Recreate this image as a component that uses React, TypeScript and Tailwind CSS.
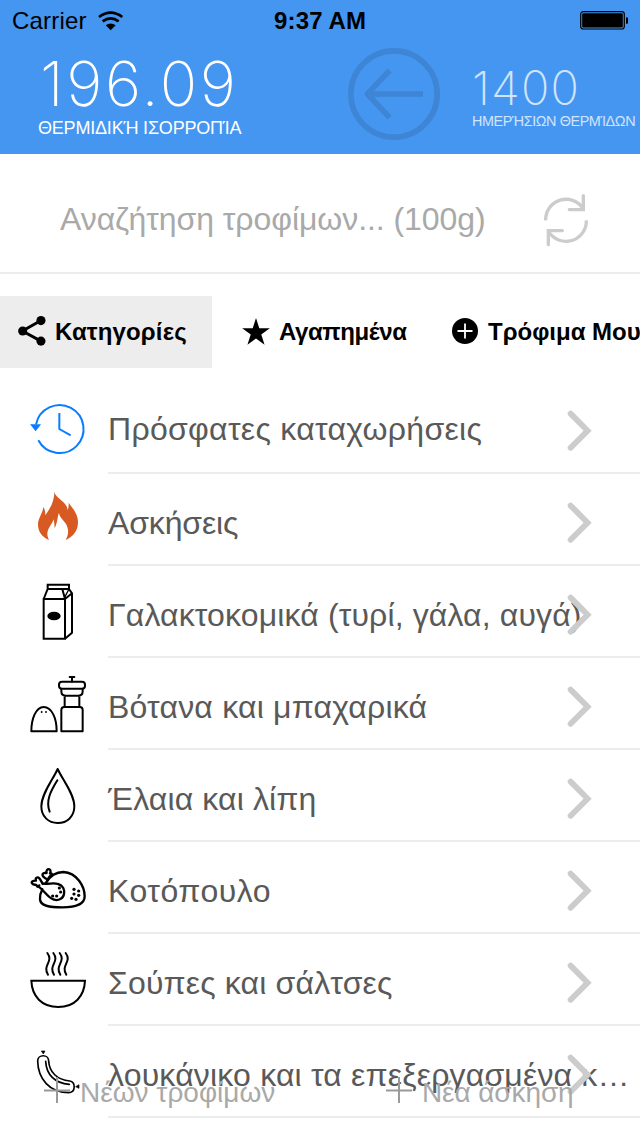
import type { ReactNode } from "react";

const line = {
  fill: "none",
  stroke: "#000",
  strokeWidth: 6,
  strokeLinejoin: "round" as const,
  strokeLinecap: "round" as const,
};

function RowIcon({ box, children }: { box: string; children: ReactNode }) {
  return (
    <svg viewBox={box} className="ml-7 h-[90px] w-[60px] shrink-0">
      {children}
    </svg>
  );
}

const RecentIcon = () => (
  <RowIcon box="24 -24 180 270">
    <path d="M48 103A72 72 0 1 1 55 151" fill="none" stroke="#0a7cff" strokeWidth="6" />
    <path d="M118 69V117L152 136" fill="none" stroke="#0a7cff" strokeWidth="6" />
    <path d="M30 103H63L47 124Z" fill="#0a7cff" />
  </RowIcon>
);

const FireIcon = () => (
  <RowIcon box="24 252 180 270">
    <path
      d="M103 306C108 327 143 336 143 361C145 354 147 346 146 337C151 350 174 366 174 397C174 422 161 439 137 450C145 435 146 424 142 411C138 395 119 386 117 369C112 379 113 397 104 415C103 406 103 397 101 388C97 402 83 414 82 431C82 438 84 444 87 450C66 441 54 426 54 403C54 385 68 371 70 351C76 360 76 368 76 376C85 361 102 343 103 306Z"
      fill="#d65a22"
    />
  </RowIcon>
);

const MilkIcon = () => (
  <RowIcon box="24 -12 180 270">
    <g {...line} strokeLinejoin="miter">
      <path d="M71 87H135V206H71ZM71 87L83 57H127L135 87M83 57V44H147V57H127M147 57L156 70V188L135 206M135 87L156 70" />
      <path d="M147 57L135 80" strokeWidth="4" />
    </g>
    <ellipse cx="102" cy="138" rx="20" ry="13" />
  </RowIcon>
);

const SpiceIcon = () => (
  <RowIcon box="24 264 180 270">
    <g {...line}>
      <path d="M34 484H110C110 444 95 411 71 411C48 411 34 446 34 484Z" />
      <path d="M124 484V420Q124 411 133 411H179Q188 411 188 420V484Z" />
      <path d="M134 411V377M178 411V377M124 357V364Q124 377 136 377H176Q188 377 188 364V357" />
      <rect x="117" y="335" width="78" height="21" rx="9" />
      <path d="M156 322V335M149 321H163" />
    </g>
    <circle cx="65" cy="426" r="2.8" />
    <circle cx="78" cy="426" r="2.8" />
  </RowIcon>
);

const DropIcon = () => (
  <RowIcon box="24 -15 180 270">
    <path {...line} d="M113 42C100 72 64 116 64 154C64 184 85 204 113 204C142 204 163 184 163 154C163 116 126 72 113 42Z" />
    <path {...line} d="M112 76C93 107 76 137 89 170" />
  </RowIcon>
);

const ChickenIcon = () => (
  <RowIcon box="24 261 180 270">
    <g {...line} strokeWidth="7">
      <path d="M77 384C92 360 108 351 130 351C171 353 194 395 194 424C194 450 160 457 127 457C88 457 61 453 60 433C59 421 62 412 67 403" />
      <path d="M68 386C87 388 101 382 114 387C130 391 134 405 132 417C130 431 115 438 102 434C82 428 75 408 55 394" />
      <path d="M68 386C64 380 62 374 58 370C52 364 45 369 48 377C40 376 33 380 36 385C39 391 47 388 50 391C51 397 57 396 58 391" />
      <path d="M78 371C74 367 65 365 68 357C71 351 78 355 80 354C77 346 83 341 88 343C93 345 92 351 90 355C97 354 97 360 93 362C87 364 85 370 81 379" />
    </g>
    {[[118, 399], [122, 411], [98, 423], [110, 423], [162, 403], [176, 408], [162, 417], [176, 421], [155, 430], [168, 433]].map(([x, y]) => (
      <circle key={`${x}-${y}`} cx={x} cy={y} r="4.8" />
    ))}
  </RowIcon>
);

const SoupIcon = () => (
  <RowIcon box="24 -18 180 270">
    <path {...line} strokeLinejoin="miter" d="M34 122H195C193 169 164 201 115 201C65 201 36 169 34 122Z" />
    {[82, 100, 119, 137].map((x) => (
      <path key={x} {...line} d={`M${x} 39C${x + 20} 65 ${x - 16} 76 ${x + 2} 104`} />
    ))}
  </RowIcon>
);

const SausageIcon = () => (
  <RowIcon box="24 258 180 270">
    <g {...line} strokeWidth="5">
      <path d="M53 363C53 342 86 342 86 363C88 397 111 419 149 423C168 426 167 457 147 458C89 458 54 417 53 363Z" />
      <path d="M77 364C79 403 104 430 148 433" />
    </g>
    <path d="M64 333H75L70 342ZM177 434V445L167 440Z" stroke="#000" strokeWidth="2" />
  </RowIcon>
);

function Chevron() {
  return (
    <svg viewBox="0 0 28 46" className="absolute left-[566px] top-[26px] h-[46px] w-7">
      <path d="M4.6 5.6L21.6 22.7L4.6 39.8" fill="none" stroke="#ccc" strokeWidth="5.8" strokeLinecap="round" />
    </svg>
  );
}

const rows: { text: string; icon: ReactNode; className: string }[] = [
  { text: "Πρόσφατες καταχωρήσεις", icon: <RecentIcon />, className: "mt-[27px] tracking-[0.3px]" },
  { text: "Ασκήσεις", icon: <FireIcon />, className: "mt-[29px] tracking-[-0.15px]" },
  { text: "Γαλακτοκομικά (τυρί, γάλα, αυγά)", icon: <MilkIcon />, className: "mt-[29px] tracking-[0.13px]" },
  { text: "Βότανα και μπαχαρικά", icon: <SpiceIcon />, className: "mt-[29px] tracking-[0.2px]" },
  { text: "Έλαια και λίπη", icon: <DropIcon />, className: "mt-[29px] tracking-[0.12px]" },
  { text: "Κοτόπουλο", icon: <ChickenIcon />, className: "mt-[29px] tracking-[0.5px]" },
  { text: "Σούπες και σάλτσες", icon: <SoupIcon />, className: "mt-[29px] tracking-[0.16px]" },
  { text: "λουκάνικο και τα επεξεργασμένα κ…", icon: <SausageIcon />, className: "mt-[29px] tracking-[0.18px]" },
];

function Plus() {
  return (
    <svg viewBox="0 0 26 26" className="h-[26px] w-[26px] shrink-0">
      <path d="M13 0V26M0 13.5H26" stroke="#999" strokeWidth="2" />
    </svg>
  );
}

export default function App() {
  return (
    <div className="relative flex h-[1136px] w-[640px] flex-col overflow-hidden bg-white font-['Liberation_Sans',Arial,sans-serif] whitespace-nowrap">
      <header className="flex h-[154px] shrink-0 flex-col bg-[#4596f1]">
        <div className="flex h-10 shrink-0 items-center text-2xl leading-9 text-black">
          <div className="flex w-[274px] items-center gap-[10px] pt-0.5 pl-3">
            <span className="w-[76px] tracking-[0.2px]">Carrier</span>
            <svg viewBox="294 30 78 60" className="-mt-px h-5 w-[26px]">
              <path d="M297 48Q332 22 367 48" fill="none" stroke="#000" strokeWidth="8" />
              <path d="M308 61Q332 43 356 61" fill="none" stroke="#000" strokeWidth="8" />
              <path d="M317 73Q332 62 347 73L332 88Z" />
            </svg>
          </div>
          <span className="w-[306px] pt-0.5 font-bold tracking-[0.15px]">9:37 AM</span>
          <svg viewBox="0 0 48 20" className="h-5 w-12">
            <rect x="0.7" y="1.7" width="43.6" height="17.3" rx="2.5" fill="none" stroke="#000" strokeWidth="1.2" />
            <rect x="2.2" y="3.2" width="40.6" height="14.3" rx="1.2" />
            <path d="M46 7.3Q49 7.3 49 10.5T46 13.7Z" />
          </svg>
        </div>
        <div className="flex text-white">
          <div className="flex w-[348px] flex-col pl-[38px]">
            <span className="ml-0.5 h-[76px] font-['Inter'] text-[62px] leading-[88px] font-extralight tracking-[2.6px]">196.09</span>
            <span className="text-[18px] leading-6 tracking-[-0.2px]">ΘΕΡΜΙΔΙΚΉ ΙΣΟΡΡΟΠΊΑ</span>
          </div>
          <svg viewBox="84 144 276 276" className="mt-2 h-[92px] w-[92px]">
            <circle cx="222" cy="282" r="129.5" fill="none" stroke="#3e85d5" strokeWidth="17" />
            <path d="M309 282H146M209 211L142 282L209 353" fill="none" stroke="#3e85d5" strokeWidth="17" strokeLinejoin="round" />
          </svg>
          <div className="flex w-[200px] flex-col pl-8 opacity-75">
            <span className="h-[71px] font-['Inter'] text-[47px] leading-[96px] font-extralight tracking-[1.2px]">1400</span>
            <span className="text-[14.4px] leading-5 tracking-[-0.4px]">ΗΜΕΡΉΣΙΩΝ ΘΕΡΜΊΔΩΝ</span>
          </div>
        </div>
      </header>

      <div className="flex h-[120px] shrink-0 items-center border-b-2 border-[#ededed] pl-[60px]">
        <span className="mt-3 w-[482px] text-[32px] leading-10 tracking-[-0.07px] text-[#a9a9a9]">Αναζήτηση τροφίμων... (100g)</span>
        <svg viewBox="666 98 144 165" className="mt-[14px] h-[55px] w-12">
          <g fill="none" stroke="#ccc" strokeWidth="10">
            <path d="M677 180A61 61 0 0 1 790 146M799 180A61 61 0 0 1 686 214" />
            <path d="M790 106V148H748M685 253V211H727" strokeLinecap="round" />
          </g>
        </svg>
      </div>

      <nav className="mt-[22px] flex h-[72px] shrink-0 text-2xl leading-[72px] font-bold text-black">
        <div className="flex w-[212px] shrink-0 items-center bg-[#ededed] pl-[18px]">
          <svg viewBox="54 467 85 92" className="-mt-0.5 h-[30px] w-7">
            <path d="M124 481L67 513L124 544" fill="none" stroke="#000" strokeWidth="9" />
            <circle cx="124" cy="481" r="14" />
            <circle cx="68" cy="513" r="14" />
            <circle cx="124" cy="544" r="14" />
          </svg>
          <span className="ml-[9px] tracking-[0.15px]">Κατηγορίες</span>
        </div>
        <div className="flex w-[240px] shrink-0 items-center pl-[30px]">
          <svg viewBox="725 472 84 82" className="-mt-0.5 h-[27px] w-7">
            <path d="M767 472L777 503H809L783 522L793 553L767 534L741 553L751 522L725 503H757Z" />
          </svg>
          <span className="ml-[9px] tracking-[-0.4px]">Αγαπημένα</span>
        </div>
        <div className="flex shrink-0 items-center">
          <svg viewBox="0 0 26 26" className="-mt-0.5 h-[26px] w-[26px]">
            <circle cx="13" cy="13" r="13" />
            <path d="M13 5.5V20.5M5.5 13H20.5" stroke="#fff" strokeWidth="1.8" />
          </svg>
          <span className="ml-[10px]">Τρόφιμα Μου</span>
        </div>
      </nav>

      <main className="mt-[14px] flex flex-col">
        {rows.map((row) => (
          <div key={row.text} className="relative flex h-[92px] shrink-0 items-start">
            {row.icon}
            <div className="ml-5 flex h-[92px] w-[532px] shrink-0 items-start border-b-2 border-[#ededed]">
              <span className={`text-[32px] leading-10 text-[#595959] ${row.className}`}>{row.text}</span>
            </div>
            <Chevron />
          </div>
        ))}
      </main>

      <footer className="absolute inset-x-0 top-[1070px] flex h-[50px] text-[28px] leading-[46px] text-[#a9a9a9]">
        <div className="flex w-[342px] items-start pl-11">
          <span className="mt-[7px] flex"><Plus /></span>
          <span className="ml-[10px]">Νέων τροφίμων</span>
        </div>
        <div className="flex items-start pl-11">
          <span className="mt-[7px] flex"><Plus /></span>
          <span className="ml-[10px] tracking-[-0.1px]">Νέα άσκηση</span>
        </div>
      </footer>
    </div>
  );
}
